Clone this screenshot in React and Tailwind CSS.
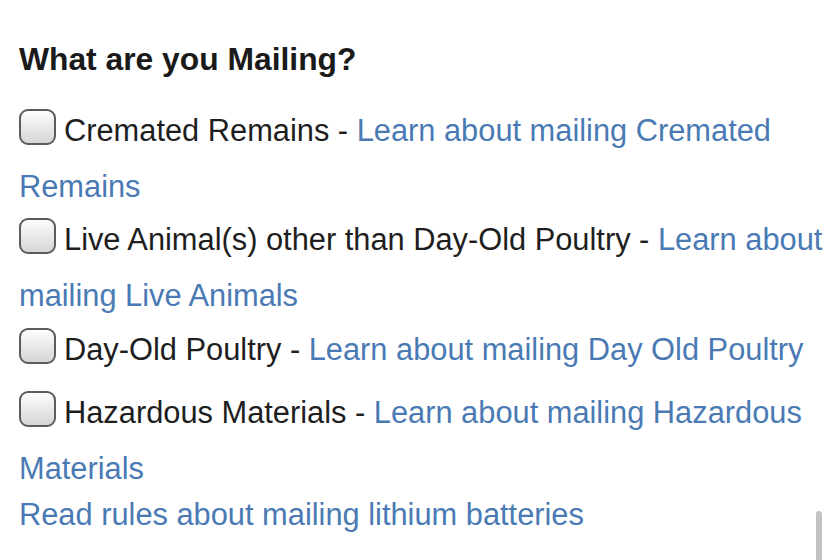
import React from "react";

function Box() {
  return (
    <span className="inline-block h-[36px] w-[37px] align-[-4px] mr-[8px] rounded-[9px] border-2 border-[#5c5c5c] bg-gradient-to-b from-[#fdfdfd] to-[#d6d6d6]" />
  );
}

function Item({ label, link, className }) {
  return (
    <p className={className}>
      <Box />
      {label} - <a className="text-[#4a7ab4]">{link}</a>
    </p>
  );
}

export default function App() {
  return (
    <div className="relative h-[560px] w-[827px] overflow-hidden bg-white font-['Liberation_Sans',Arial,sans-serif] text-[#1e1e1e]">
      <div className="pl-[19px] pt-[39px]">
        <h2 className="text-[31.8px] leading-[40px] font-bold text-[#1a1a1a]">What are you Mailing?</h2>
        <div className="mt-[24px] text-[30.8px] leading-[56px]">
          <Item label="Cremated Remains" link="Learn about mailing Cremated Remains" />
          <Item className="-mt-[3px]" label="Live Animal(s) other than Day-Old Poultry" link="Learn about mailing Live Animals" />
          <Item className="-mt-[2px]" label="Day-Old Poultry" link="Learn about mailing Day Old Poultry" />
          <Item className="mt-[7px]" label="Hazardous Materials" link="Learn about mailing Hazardous Materials" />
          <p className="-mt-[10px]">
            <a className="text-[#4a7ab4]">Read rules about mailing lithium batteries</a>
          </p>
        </div>
      </div>
      <div className="absolute left-[816px] top-[511px] h-[60px] w-[6px] rounded-full bg-[#c2c2c2]" />
    </div>
  );
}
